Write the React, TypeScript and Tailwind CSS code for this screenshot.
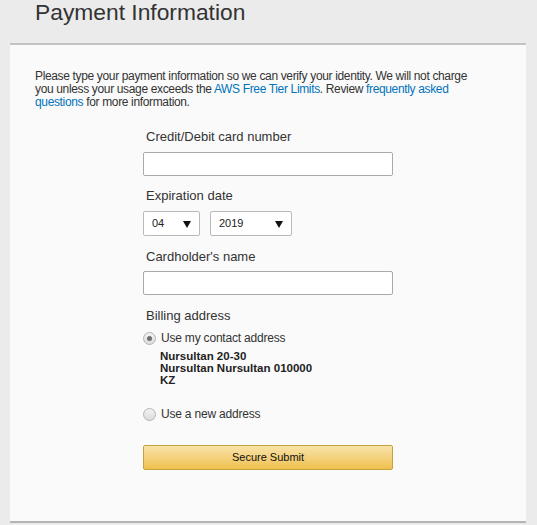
import { useState } from "react";

function Radio({ checked, onClick }: { checked: boolean; onClick: () => void }) {
  return (
    <button
      type="button"
      onClick={onClick}
      className="flex h-[13px] w-[13px] shrink-0 items-center justify-center rounded-full border border-[#b4b4b4] bg-gradient-to-b from-[#f2f2f2] to-[#dcdcdc]"
    >
      {checked && <span className="h-[5px] w-[5px] rounded-full bg-[#6e6e6e]" />}
    </button>
  );
}

function Select({ value, width }: { value: string; width: string }) {
  return (
    <div
      className={`flex h-[25px] items-center justify-between rounded-[2px] border border-[#b9b9b9] bg-white pl-[8px] pr-[8px] text-[11px] text-[#222] ${width}`}
    >
      <span>{value}</span>
      <svg width="8" height="8" viewBox="0 0 8 8">
        <path d="M0 1 H8 L4 8 Z" fill="#111" />
      </svg>
    </div>
  );
}

export default function App() {
  const [useContact, setUseContact] = useState(true);

  return (
    <div
      className="min-h-[525px] overflow-hidden bg-[#ebebeb] text-[#333]"
      style={{ fontFamily: '"Liberation Sans", Arial, sans-serif' }}
    >
      <h1 className="pl-[35px] text-[22.8px] leading-[24px] font-normal text-[#333]">
        Payment Information
      </h1>

      <div className="mx-[10px] mt-[19px] w-[516px] border-t-2 border-b-2 border-t-[#c3c3c3] border-b-[#b5b5b5] bg-[#fafafa] pb-[51px]">
        <p className="whitespace-nowrap pl-[25px] pt-[25px] text-[12px] leading-[13px] tracking-[-0.35px]">
          Please type your payment information so we can verify your identity. We will not charge
          <br />
          you unless your usage exceeds the <a className="text-[#0073bb]">AWS Free Tier Limits</a>.
          Review <a className="text-[#0073bb]">frequently asked</a>
          <br />
          <a className="text-[#0073bb]">questions</a> for more information.
        </p>

        <form className="ml-[133px] w-[250px] pt-[19px]" onSubmit={(e) => e.preventDefault()}>
          <label className="block pl-[3px] text-[13px] leading-[18px]">
            Credit/Debit card number
          </label>
          <input className="mt-[6px] block h-[24px] w-full rounded-[2px] border border-[#a9a9a9] bg-white outline-none" />

          <label className="mt-[11px] block pl-[3px] text-[13px] leading-[18px]">
            Expiration date
          </label>
          <div className="mt-[6px] flex gap-[10px]">
            <Select value="04" width="w-[57px]" />
            <Select value="2019" width="w-[82px]" />
          </div>

          <label className="mt-[12px] block pl-[3px] text-[13px] leading-[18px]">
            Cardholder's name
          </label>
          <input className="mt-[5px] block h-[24px] w-full rounded-[2px] border border-[#a9a9a9] bg-white outline-none" />

          <div className="mt-[12px] pl-[3px] text-[13px] leading-[18px]">Billing address</div>

          <div className="mt-[4px] flex items-center gap-[5px] text-[12px] leading-[18px] tracking-[-0.2px]">
            <Radio checked={useContact} onClick={() => setUseContact(true)} />
            <span>Use my contact address</span>
          </div>
          <div className="mt-[3px] pl-[17px] text-[11.5px] leading-[12px] font-bold text-[#222]">
            <div>Nursultan 20-30</div>
            <div>Nursultan Nursultan 010000</div>
            <div>KZ</div>
          </div>

          <div className="mt-[19px] flex items-center gap-[5px] text-[12px] leading-[18px] tracking-[-0.2px]">
            <Radio checked={!useContact} onClick={() => setUseContact(false)} />
            <span>Use a new address</span>
          </div>

          <button
            type="submit"
            className="mt-[22px] block h-[25px] w-full rounded-[2px] border border-[#c5a13f] bg-gradient-to-b from-[#f8e3a8] to-[#efc04a] text-[11px] text-[#111]"
          >
            Secure Submit
          </button>
        </form>
      </div>
    </div>
  );
}
